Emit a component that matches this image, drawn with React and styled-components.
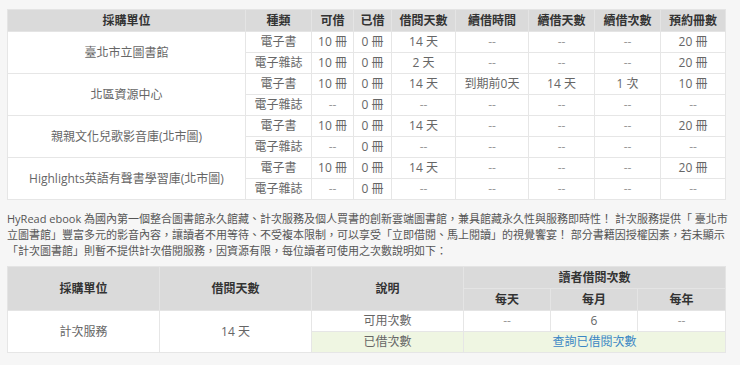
import React from 'react';
import styled, { createGlobalStyle } from 'styled-components';

const GlobalStyle = createGlobalStyle`
  html, body {
    margin: 0;
    padding: 0;
    background: #f6f6f6;
  }
  body {
    font-family: "Open Sans", "Noto Sans CJK TC", sans-serif;
    color: #666;
  }
`;

const Page = styled.div`
  width: 718px;
  padding: 9px 7px 0 7px;
`;

const Table = styled.table`
  width: 718px;
  border-collapse: collapse;
  table-layout: fixed;
  background: #fff;
  font-size: 12px;
`;

const HeadCell = styled.th`
  background: #dadada;
  color: #333;
  font-weight: bold;
  border: 1px solid #e4e4e4;
  height: ${({ $h }) => $h || 21}px;
  padding: 0;
  text-align: center;
  line-height: 1;
`;

const Cell = styled.td`
  border: 1px solid #e6e6e6;
  height: 20px;
  padding: 0;
  text-align: center;
  color: ${({ $dash }) => ($dash ? '#999' : '#666')};
  background: ${({ $green }) => ($green ? '#eff6e2' : '#fff')};
  line-height: 1;
`;

const LinkText = styled.a`
  color: #3b86c4;
  text-decoration: none;
  cursor: pointer;
`;

const Intro = styled.p`
  margin: 11px 0 7px 0;
  font-size: 11px;
  line-height: 16px;
  color: #555;
  white-space: nowrap;
`;

const quotaCols = [238, 66, 42, 38, 64, 73, 66, 66, 65];
const quotaHead = ['採購單位', '種類', '可借', '已借', '借閱天數', '續借時間', '續借天數', '續借次數', '預約冊數'];

const libraries = [
  {
    name: '臺北市立圖書館',
    rows: [
      ['電子書', '10 冊', '0 冊', '14 天', '--', '--', '--', '20 冊'],
      ['電子雜誌', '10 冊', '0 冊', '2 天', '--', '--', '--', '20 冊'],
    ],
  },
  {
    name: '北區資源中心',
    rows: [
      ['電子書', '10 冊', '0 冊', '14 天', '到期前0天', '14 天', '1 次', '10 冊'],
      ['電子雜誌', '--', '0 冊', '--', '--', '--', '--', '--'],
    ],
  },
  {
    name: '親親文化兒歌影音庫(北市圖)',
    rows: [
      ['電子書', '10 冊', '0 冊', '14 天', '--', '--', '--', '20 冊'],
      ['電子雜誌', '--', '0 冊', '--', '--', '--', '--', '--'],
    ],
  },
  {
    name: 'Highlights英語有聲書學習庫(北市圖)',
    rows: [
      ['電子書', '10 冊', '0 冊', '14 天', '--', '--', '--', '20 冊'],
      ['電子雜誌', '--', '0 冊', '--', '--', '--', '--', '--'],
    ],
  },
];

const QuotaTable = () => (
  <Table>
    <colgroup>
      {quotaCols.map((w, i) => <col key={i} style={{ width: w }} />)}
    </colgroup>
    <thead>
      <tr>
        {quotaHead.map((h) => <HeadCell key={h}>{h}</HeadCell>)}
      </tr>
    </thead>
    <tbody>
      {libraries.map((lib) => lib.rows.map((row, r) => (
        <tr key={lib.name + r}>
          {r === 0 && <Cell rowSpan={2}>{lib.name}</Cell>}
          {row.map((v, i) => <Cell key={i} $dash={v === '--'}>{v}</Cell>)}
        </tr>
      )))}
    </tbody>
  </Table>
);

const PerUseTable = () => (
  <Table>
    <colgroup>
      {[152, 152, 152, 87, 87, 88].map((w, i) => <col key={i} style={{ width: w }} />)}
    </colgroup>
    <thead>
      <tr>
        <HeadCell rowSpan={2}>採購單位</HeadCell>
        <HeadCell rowSpan={2}>借閱天數</HeadCell>
        <HeadCell rowSpan={2}>說明</HeadCell>
        <HeadCell colSpan={3}>讀者借閱次數</HeadCell>
      </tr>
      <tr>
        <HeadCell>每天</HeadCell>
        <HeadCell>每月</HeadCell>
        <HeadCell>每年</HeadCell>
      </tr>
    </thead>
    <tbody>
      <tr>
        <Cell rowSpan={2}>計次服務</Cell>
        <Cell rowSpan={2}>14 天</Cell>
        <Cell>可用次數</Cell>
        <Cell $dash>--</Cell>
        <Cell>6</Cell>
        <Cell $dash>--</Cell>
      </tr>
      <tr>
        <Cell $green>已借次數</Cell>
        <Cell $green colSpan={3}><LinkText>查詢已借閱次數</LinkText></Cell>
      </tr>
    </tbody>
  </Table>
);

export default function App() {
  return (
    <Page>
      <GlobalStyle />
      <QuotaTable />
      <Intro>
        HyRead ebook 為國內第一個整合圖書館永久館藏、計次服務及個人買書的創新雲端圖書館，兼具館藏永久性與服務即時性！ 計次服務提供「 臺北市
        <br />
        立圖書館」豐富多元的影音內容，讓讀者不用等待、不受複本限制，可以享受「立即借閱、馬上閱讀」的視覺饗宴！ 部分書籍因授權因素，若未顯示
        <br />
        「計次圖書館」則暫不提供計次借閱服務，因資源有限，每位讀者可使用之次數說明如下：
      </Intro>
      <PerUseTable />
    </Page>
  );
}
